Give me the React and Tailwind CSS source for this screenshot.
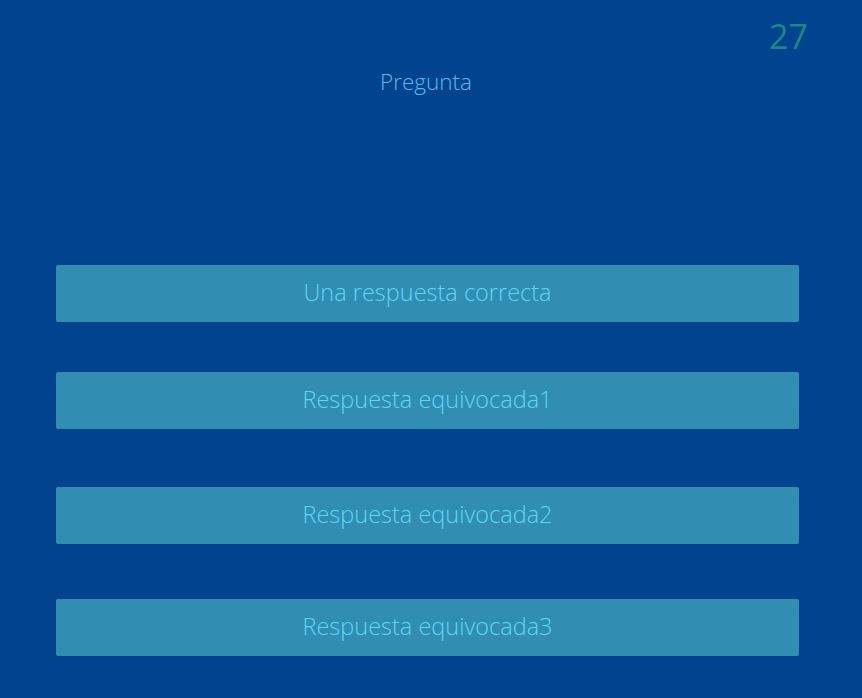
export default function App() {
  const font = { fontFamily: '"Open Sans", "Segoe UI", sans-serif' };
  const btn =
    "w-[743px] h-[57px] ml-[56px] rounded-[2px] bg-[#328db2] text-[#5fd6f4] text-[23.5px] font-light flex items-center justify-center leading-none pb-[1px]";
  return (
    <div className="w-[862px] h-[698px] bg-[#02438f] flex flex-col" style={font}>
      <div className="h-[60px] flex justify-end pr-[54px] pt-[14px]">
        <span className="text-[34px] leading-[44px] text-[#168a86]">27</span>
      </div>
      <div className="h-[46px] flex justify-center">
        <span className="text-[22.5px] font-light text-[#5ab9ea] leading-none pt-[11px] mr-[10px]">Pregunta</span>
      </div>
      <div className={btn + " mt-[159px]"}>Una respuesta correcta</div>
      <div className={btn + " mt-[50px]"}>Respuesta equivocada1</div>
      <div className={btn + " mt-[58px]"}>Respuesta equivocada2</div>
      <div className={btn + " mt-[55px]"}>Respuesta equivocada3</div>
    </div>
  );
}
